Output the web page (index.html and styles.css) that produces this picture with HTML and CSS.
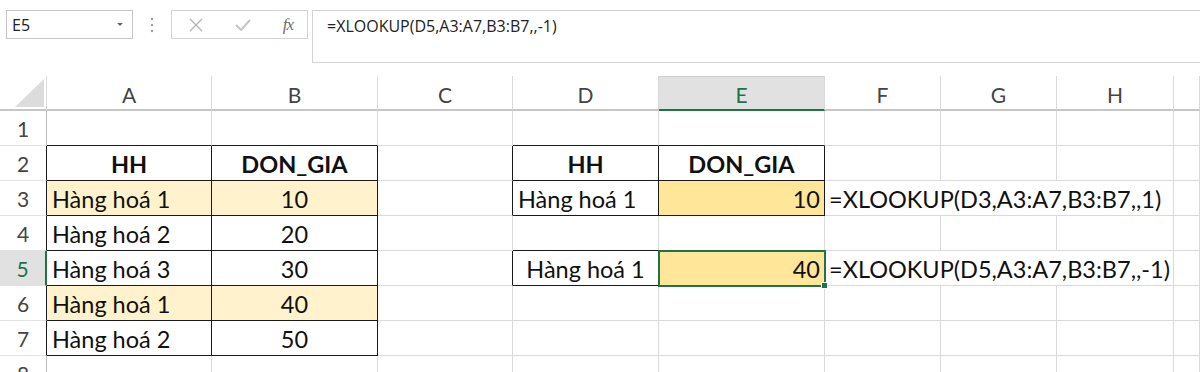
FILE: index.html
```html
<!DOCTYPE html>
<html lang="vi">
<head>
<meta charset="UTF-8">
<title>XLOOKUP</title>
<link rel="stylesheet" href="styles.css">
</head>
<body>

<div class="formula-bar">
    <div class="name-box">
        <span>E5</span>
        <span class="caret"></span>
    </div>
    <div class="grip">
        <svg width="4" height="16" viewBox="0 0 4 16"><circle cx="2" cy="2" r="1.2"/><circle cx="2" cy="8" r="1.2"/><circle cx="2" cy="14" r="1.2"/></svg>
    </div>
    <div class="fx-box">
        <svg class="icon-x" width="14" height="14" viewBox="0 0 14 14"><path d="M1 1 L13 13 M13 1 L1 13"/></svg>
        <svg class="icon-ok" width="16" height="12" viewBox="0 0 16 12"><path d="M1 6 L6 11 L15 1"/></svg>
        <span class="fx">fx</span>
    </div>
    <div class="formula-input">=XLOOKUP(D5,A3:A7,B3:B7,,-1)</div>
</div>

<div class="sheet">
    <!-- column headers -->
    <div class="corner"><svg width="29" height="28" viewBox="0 0 29 28"><polygon points="29,0 29,28 0,28"/></svg></div>
    <div class="ch">A</div>
    <div class="ch">B</div>
    <div class="ch">C</div>
    <div class="ch">D</div>
    <div class="ch sel">E</div>
    <div class="ch">F</div>
    <div class="ch">G</div>
    <div class="ch">H</div>
    <div class="ch"></div>

    <!-- row 1 -->
    <div class="rh">1</div>
    <div class="c bb"></div>
    <div class="c bb"></div>
    <div class="c"></div>
    <div class="c bb"></div>
    <div class="c bb"></div>
    <div class="c"></div>
    <div class="c"></div>
    <div class="c"></div>
    <div class="c"></div>

    <!-- row 2 -->
    <div class="rh br">2</div>
    <div class="c t center bold">HH</div>
    <div class="c t center bold">DON_GIA</div>
    <div class="c br"></div>
    <div class="c t center bold">HH</div>
    <div class="c t center bold">DON_GIA</div>
    <div class="c"></div>
    <div class="c"></div>
    <div class="c"></div>
    <div class="c"></div>

    <!-- row 3 -->
    <div class="rh br">3</div>
    <div class="c t light">Hàng hoá 1</div>
    <div class="c t light center">10</div>
    <div class="c br"></div>
    <div class="c t">Hàng hoá 1</div>
    <div class="c t gold right">10</div>
    <div class="c overflow">=XLOOKUP(D3,A3:A7,B3:B7,,1)</div>
    <div class="c"></div>

    <!-- row 4 -->
    <div class="rh br">4</div>
    <div class="c t">Hàng hoá 2</div>
    <div class="c t center">20</div>
    <div class="c"></div>
    <div class="c bb"></div>
    <div class="c bb"></div>
    <div class="c"></div>
    <div class="c"></div>
    <div class="c"></div>
    <div class="c"></div>

    <!-- row 5 -->
    <div class="rh sel">5</div>
    <div class="c t">Hàng hoá 3</div>
    <div class="c t center">30</div>
    <div class="c br"></div>
    <div class="c t center">Hàng hoá 1</div>
    <div class="c t gold right active">40</div>
    <div class="c overflow">=XLOOKUP(D5,A3:A7,B3:B7,,-1)</div>
    <div class="c"></div>

    <!-- row 6 -->
    <div class="rh br">6</div>
    <div class="c t light">Hàng hoá 1</div>
    <div class="c t light center">40</div>
    <div class="c"></div>
    <div class="c"></div>
    <div class="c"></div>
    <div class="c"></div>
    <div class="c"></div>
    <div class="c"></div>
    <div class="c"></div>

    <!-- row 7 -->
    <div class="rh br">7</div>
    <div class="c t">Hàng hoá 2</div>
    <div class="c t center">50</div>
    <div class="c"></div>
    <div class="c"></div>
    <div class="c"></div>
    <div class="c"></div>
    <div class="c"></div>
    <div class="c"></div>
    <div class="c"></div>

    <!-- row 8 -->
    <div class="rh">8</div>
    <div class="c"></div>
    <div class="c"></div>
    <div class="c"></div>
    <div class="c"></div>
    <div class="c"></div>
    <div class="c"></div>
    <div class="c"></div>
    <div class="c"></div>
    <div class="c"></div>
</div>

</body>
</html>
```

FILE: styles.css
```css
body {
    margin: 0;
    background: #fff;
    overflow: hidden;
}

/* formula bar */
.formula-bar {
    display: flex;
    align-items: flex-start;
    height: 76px;
    box-sizing: border-box;
    padding: 10px 0 0 6px;
    font-family: "Open Sans", "Noto Sans", sans-serif;
    font-size: 16px;
    color: #222;
}

.name-box {
    width: 127px;
    height: 29px;
    box-sizing: border-box;
    border: 1px solid #c6c6c6;
    display: flex;
    align-items: center;
    justify-content: space-between;
    padding: 0 9px 0 5px;
}

.caret {
    width: 0;
    height: 0;
    border-left: 3px solid transparent;
    border-right: 3px solid transparent;
    border-top: 3px solid #666;
}

.grip {
    width: 38px;
    height: 29px;
    display: flex;
    align-items: center;
    justify-content: center;
}

.grip svg { fill: #9a9a9a; }

.fx-box {
    width: 137px;
    height: 29px;
    box-sizing: border-box;
    border: 1px solid #d4d4d4;
    display: flex;
    align-items: center;
    padding: 0 14px 0 17px;
    justify-content: space-between;
}

.icon-x path,
.icon-ok path {
    fill: none;
    stroke-width: 1.4;
}
.icon-x path { stroke: #b4b4b4; }
.icon-ok path { stroke: #c4c4c4; stroke-width: 2; }

.fx {
    font-family: "Liberation Serif", serif;
    font-style: italic;
    font-size: 17px;
    color: #6e6e6e;
    letter-spacing: -1px;
}

.formula-input {
    flex: 1;
    margin-left: 4px;
    height: 53px;
    box-sizing: border-box;
    border: 1px solid #d4d4d4;
    border-right: none;
    padding: 5px 14px;
    line-height: 20px;
}

/* sheet grid */
.sheet {
    display: grid;
    grid-template-columns: 47px 165px 166px 135px 146px 166px 116px 116px 117px 1fr;
    grid-auto-rows: 35px;
    font-family: "Lato", "Liberation Sans", sans-serif;
    font-size: 23.5px;
    color: #111;
}

.sheet > div {
    box-sizing: border-box;
    display: flex;
    align-items: flex-end;
    padding-bottom: 2px;
    white-space: nowrap;
}

.corner {
    border-right: 1px solid #dadada;
    border-bottom: 2px solid #c6c6c6;
    justify-content: flex-end;
    padding: 0 2px 2px 0 !important;
}
.corner svg { fill: #dcdcdc; }

.ch {
    justify-content: center;
    color: #444;
    font-size: 21px;
    border-right: 1px solid #dadada;
    border-bottom: 2px solid #c6c6c6;
}

.ch.sel {
    background: #e1e1e1;
    color: #217346;
    border-top: 1px solid #d0d0d0;
    border-bottom-color: #217346;
}

.rh {
    justify-content: center;
    color: #444;
    font-size: 21px;
    padding-bottom: 4px !important;
    border-right: 1px solid #bcbcbc;
    border-bottom: 1px solid #e2e2e2;
}

.rh.sel {
    background: #e1e1e1;
    color: #217346;
    border-right: 2px solid #217346;
}

.c {
    border-right: 1px solid #dadada;
    border-bottom: 1px solid #dadada;
    padding-left: 5px;
}

.rh.br,
.c.br { border-right-color: #1a1a1a; }
.c.bb { border-bottom-color: #1a1a1a; }

.c.t {
    border-right-color: #1a1a1a;
    border-bottom-color: #1a1a1a;
}

.center { justify-content: center; padding-left: 0 !important; }
.right { justify-content: flex-end; padding-right: 4px; }
.bold { font-weight: 700; }

.light { background: #fff2cc; }
.gold { background: #ffe699; }

.overflow {
    grid-column: span 3;
    padding-left: 4px !important;
}

.active {
    position: relative;
    outline: 2px solid #217346;
    outline-offset: -1px;
}

.active::after {
    content: "";
    position: absolute;
    right: -4px;
    bottom: -4px;
    width: 5px;
    height: 5px;
    background: #217346;
    border: 1px solid #fff;
}
```
